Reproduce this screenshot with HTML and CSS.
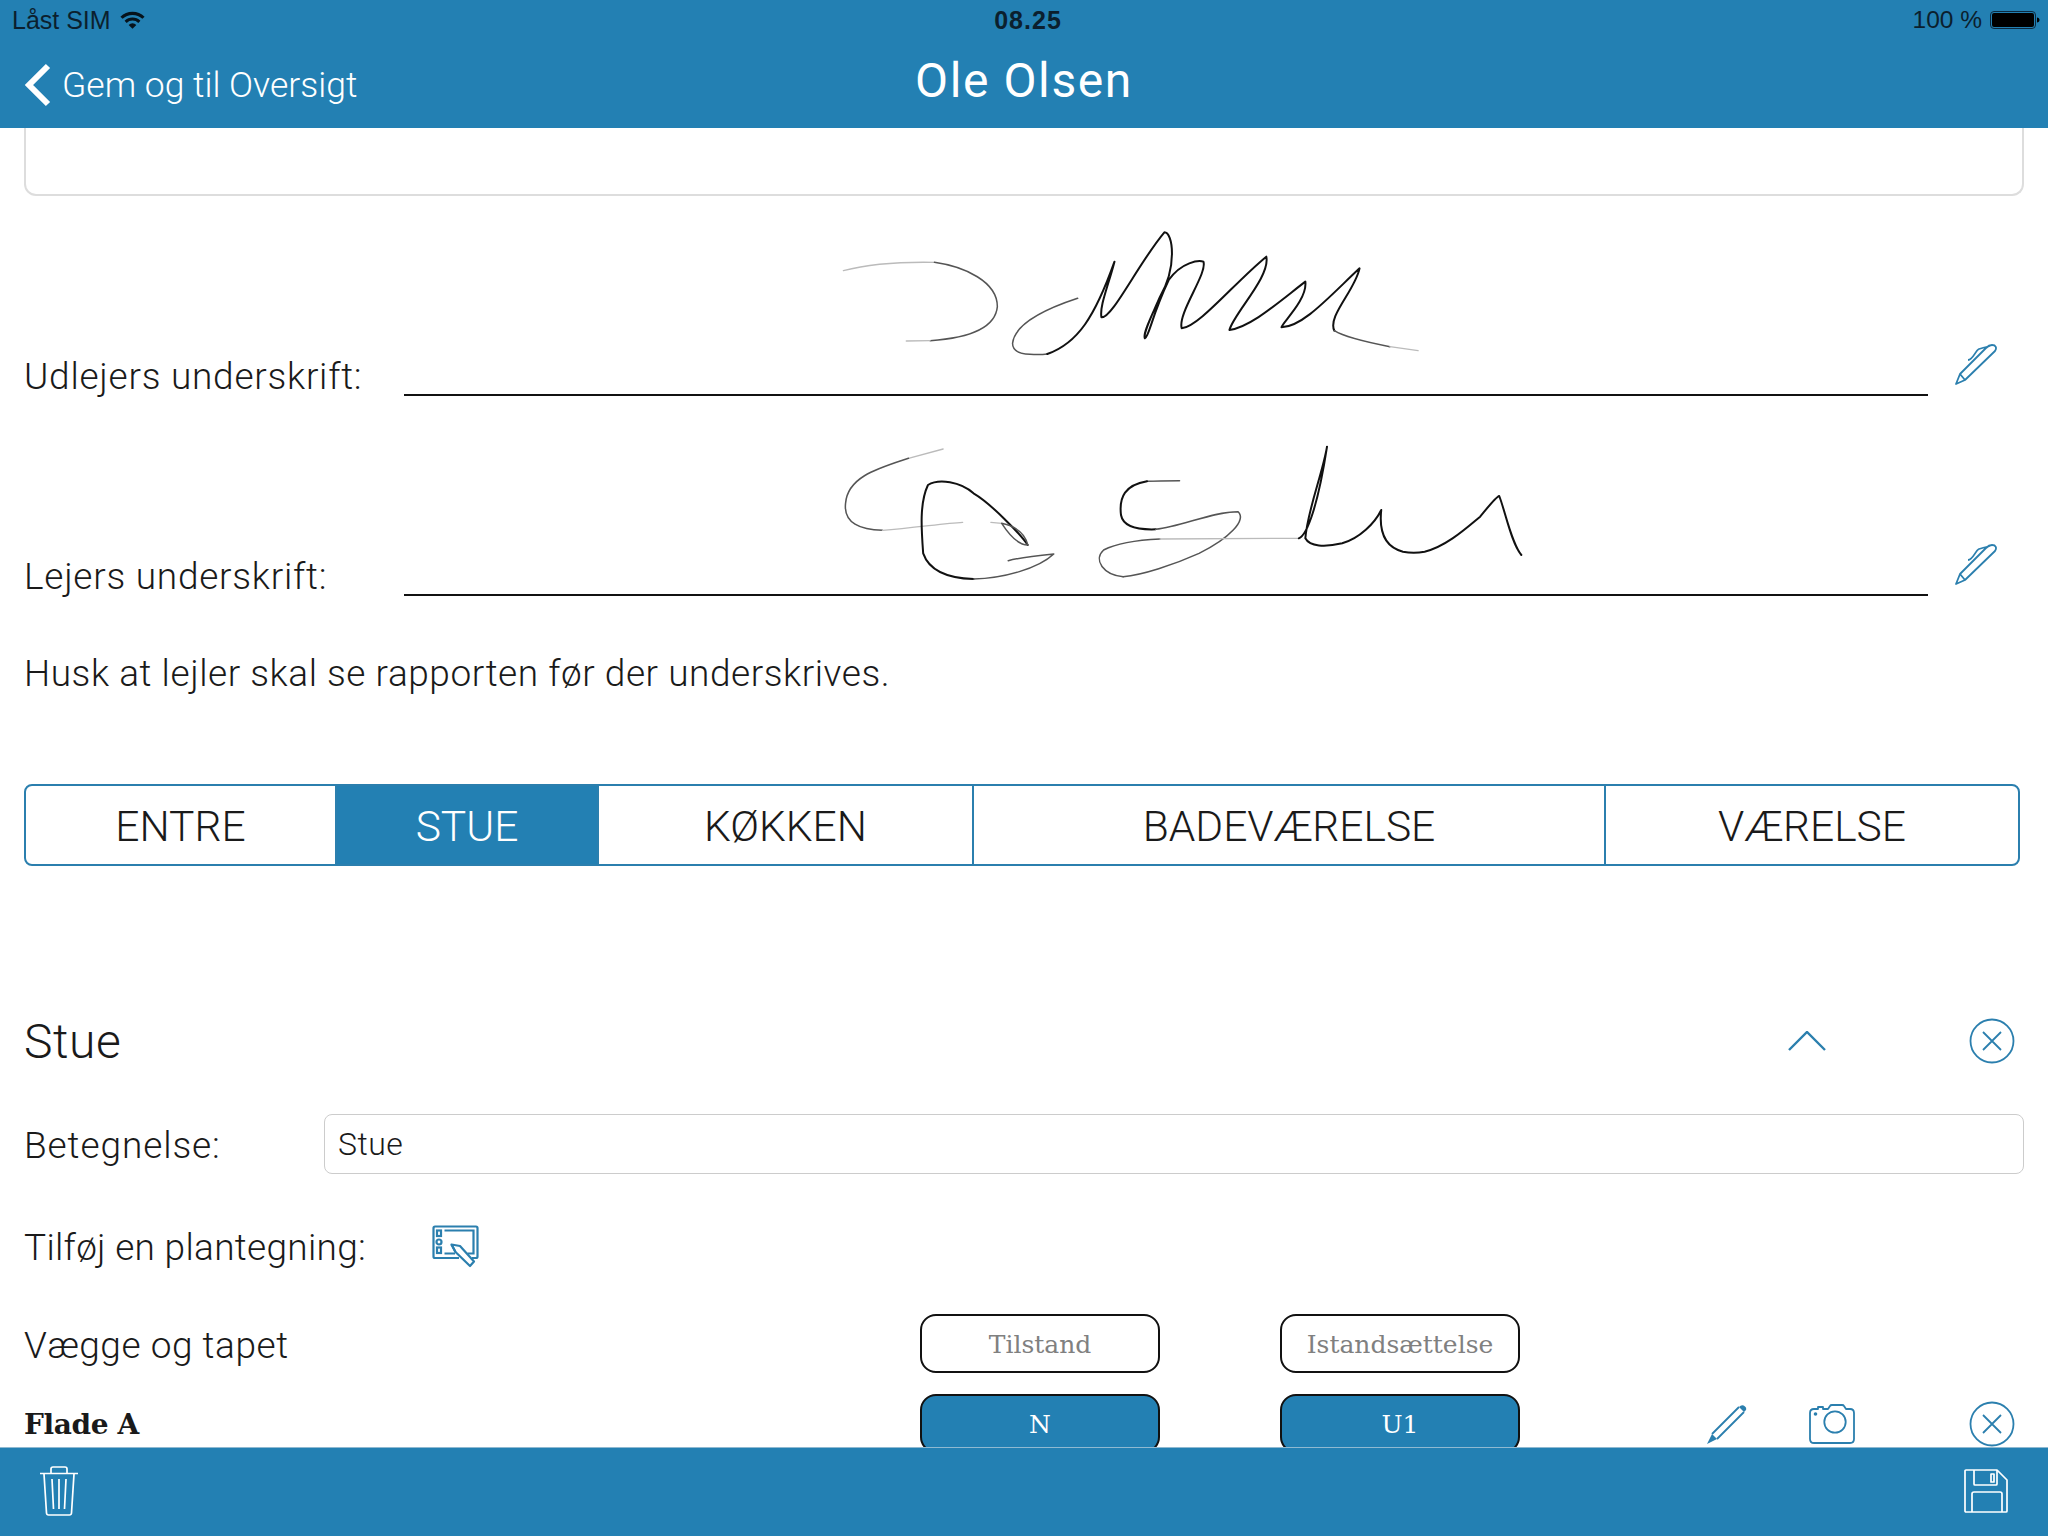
FILE: index.html
```html
<!DOCTYPE html>
<html lang="da">
<head>
  <meta charset="UTF-8" />
  <title>Ole Olsen</title>
  <link rel="stylesheet" href="styles.css">
</head>
<body>

<div class="app">
  <header class="top">
    <div class="status">
      <div class="status-left">
        <span>Låst SIM</span>
        <svg class="wifi" viewBox="0 0 24 17"><path d="M12 17 8.300 13.200a5.400 5.400 0 0 1 7.400 0zM6.400 11.300 4.400 9.200a11 11 0 0 1 15.200 0l-2 2.100a8.100 8.100 0 0 0-11.200 0zM2.500 7.400.4 5.300a16.700 16.700 0 0 1 23.200 0l-2.100 2.100a13.800 13.800 0 0 0-19 0z"/></svg>
      </div>
      <div class="status-time">08.25</div>
      <div class="status-right">
        <span>100 %</span>
        <svg class="battery" viewBox="0 0 50 18"><rect x="0.5" y="0.5" width="45" height="17" rx="3.5" fill="none" stroke="#0b2a40"/><rect x="2" y="2" width="42" height="14" rx="2" fill="#000"/><path d="M47 6.500c1.500 0 2.500 1 2.500 2.500s-1 2.500-2.500 2.500z" fill="#000"/></svg>
      </div>
    </div>
    <div class="nav">
      <a class="back">
        <svg class="back-icon" viewBox="0 0 30 46"><path d="M25 4 6 23l19 19" fill="none" stroke="#fff" stroke-width="6"/></svg>
        <span>Gem og til Oversigt</span>
      </a>
      <h1>Ole Olsen</h1>
    </div>
  </header>

  <main class="content">
    <div class="notes-box"></div>

    <div class="sign-row">
      <label>Udlejers underskrift:</label>
      <div class="sign-line"></div>
      <svg class="pen" viewBox="0 0 42 42"><path d="M1 40 10 36 40 7C42 4 41 1 37 1 35 1 33 2 31 4L5 30zM5 30l5 6M13 16c5 0 7-9 11-11 3-1 7-2 11-3" fill="none" stroke="#2b7fae" stroke-width="1.800" stroke-linejoin="round"/></svg>
      <svg class="signature sig-one" viewBox="0 30 1706 450" preserveAspectRatio="none">
        <g fill="none" stroke-linecap="round" stroke-linejoin="round">
          <path class="ink-faint" d="M100 182C150 165 230 155 310 157"/>
          <path class="ink-thin" d="M310 157C380 170 455 215 455 290 450 360 380 385 300 392"/>
          <path class="ink-faint" d="M300 392 245 393"/>
          <path class="ink-thin" d="M640 265C570 295 495 340 490 400 490 425 510 432 530 433 545 434 558 434 570 432"/>
          <path class="ink" d="M570 432C640 400 680 320 725 155 710 230 690 290 695 322 720 325 780 160 840 67 860 67 870 170 830 260 810 320 790 370 795 385 805 380 810 320 850 210 880 155 920 150 930 155 940 190 870 310 880 355 920 350 1000 220 1075 140 1085 200 1000 310 990 360 1040 350 1100 280 1165 215 1170 270 1110 340 1110 352 1160 350 1220 260 1290 175 1280 240 1215 320 1232 362"/>
          <path class="ink-thin" d="M1232 362C1260 385 1320 400 1360 410"/>
          <path class="ink-faint" d="M1360 410 1425 422"/>
        </g>
      </svg>
    </div>

    <div class="sign-row">
      <label>Lejers underskrift:</label>
      <div class="sign-line"></div>
      <svg class="pen" viewBox="0 0 42 42"><path d="M1 40 10 36 40 7C42 4 41 1 37 1 35 1 33 2 31 4L5 30zM5 30l5 6M13 16c5 0 7-9 11-11 3-1 7-2 11-3" fill="none" stroke="#2b7fae" stroke-width="1.800" stroke-linejoin="round"/></svg>
      <svg class="signature sig-two" viewBox="0 690 1706 450" preserveAspectRatio="none">
        <g fill="none" stroke-linecap="round" stroke-linejoin="round">
          <path class="ink-faint" d="M330 717 250 745"/>
          <path class="ink-thin" d="M250 745C180 775 110 800 105 880 100 940 140 960 190 961"/>
          <path class="ink-faint" d="M190 961C260 955 330 940 375 937M440 937 465 940"/>
          <path class="ink" d="M525 1005C510 975 440 880 400 850 370 815 320 805 295 825 275 880 280 960 284 1030 300 1090 350 1105 400 1107"/>
          <path class="ink-thin" d="M400 1107C470 1105 550 1075 585 1032 540 1038 500 1045 480 1052M465 940C500 950 520 975 525 1005 500 1005 480 970 465 940"/>
          <path class="ink-thin" d="M875 812C850 812 825 812 800 814"/>
          <path class="ink" d="M800 814C750 825 735 860 740 915 745 950 775 960 820 958"/>
          <path class="ink-thin" d="M820 958C880 950 950 905 1010 905 1030 930 990 985 920 1030 860 1065 790 1095 745 1100"/>
          <path class="ink-thin" d="M745 1100C700 1095 675 1050 700 1020 730 1000 780 990 830 987"/>
          <path class="ink-faint" d="M830 987 1150 985"/>
          <path class="ink" d="M1150 985C1170 975 1195 880 1215 710 1205 790 1170 900 1165 985 1175 1010 1210 1012 1250 1000 1290 985 1325 940 1340 900 1335 960 1345 1010 1390 1025 1405 1029 1425 1029 1440 1025 1490 1010 1540 950 1568 920 1590 885 1605 860 1612 858 1625 900 1640 1000 1663 1035"/>
        </g>
      </svg>
    </div>

    <p class="note">Husk at lejler skal se rapporten før der underskrives.</p>

    <div class="tabs">
      <div class="tab">ENTRE</div>
      <div class="tab active">STUE</div>
      <div class="tab">KØKKEN</div>
      <div class="tab">BADEVÆRELSE</div>
      <div class="tab">VÆRELSE</div>
    </div>

    <div class="room-head">
      <h2>Stue</h2>
      <svg class="chevron" viewBox="0 0 40 20"><path d="M2 19 20 1l18 18" fill="none" stroke="#2b7fae" stroke-width="2.400"/></svg>
      <svg class="close" viewBox="0 0 46 46"><circle cx="23" cy="23" r="21.500" fill="none" stroke="#2b7fae" stroke-width="1.800"/><path d="M14 14l18 18M32 14 14 32" stroke="#2b7fae" stroke-width="1.800"/></svg>
    </div>

    <div class="field-row">
      <label>Betegnelse:</label>
      <div class="text-input">Stue</div>
    </div>

    <div class="plan-row">
      <label>Tilføj en plantegning:</label>
      <svg class="tablet" viewBox="0 0 48 44"><g fill="none" stroke="#2b7fae" stroke-width="2.200"><path d="M27 33H3q-1.500 0-1.500-1.500V3Q1.500 1.500 3 1.500h41q1.500 0 1.500 1.500v28.500q0 1.500-1.500 1.500h-4"/><path d="M12.500 5.500h29v23h-6M23 28.500H12.500z"/><rect x="5" y="5.500" width="4" height="5.500"/><rect x="5" y="22.500" width="4" height="5.500"/><circle cx="7" cy="17" r="2.500"/><path d="M19.500 19.500 28 21 42 36.500 38 41 23.500 27z" stroke-linejoin="round"/><path d="M19.500 19.500 23.500 27"/></g></svg>
    </div>

    <div class="item-row head">
      <span class="item-name">Vægge og tapet</span>
      <button class="pick">Tilstand</button>
      <button class="pick">Istandsættelse</button>
    </div>

    <div class="item-row">
      <strong class="item-title">Flade A</strong>
      <button class="pick selected">N</button>
      <button class="pick selected">U1</button>
      <svg class="pencil" viewBox="0 0 42 42"><path d="M6 31 33 4M11 36 38 9" stroke="#2b7fae" stroke-width="1.800" fill="none"/><path d="M33 4q3-3 6-.5t-1 5.500l-5-5z" fill="#2b7fae"/><path d="M6 31l5 5-10 5z" fill="#2b7fae"/></svg>
      <svg class="camera" viewBox="0 0 46 42"><path d="M5 6h4V4h5v2h5l2-3q.500-1 2-1h10q1.500 0 2 1l2 3h4q4 0 4 4v26q0 4-4 4H5q-4 0-4-4V10q0-4 4-4z" fill="none" stroke="#2b7fae" stroke-width="1.800" stroke-linejoin="round"/><circle cx="26" cy="19" r="10.700" fill="none" stroke="#2b7fae" stroke-width="1.800"/><circle cx="6.500" cy="11" r="1.800" fill="#2b7fae"/></svg>
      <svg class="close" viewBox="0 0 46 46"><circle cx="23" cy="23" r="21.500" fill="none" stroke="#2b7fae" stroke-width="1.800"/><path d="M14 14l18 18M32 14 14 32" stroke="#2b7fae" stroke-width="1.800"/></svg>
    </div>
  </main>

  <footer class="bottom">
    <svg class="trash" viewBox="0 0 38 50"><g fill="none" stroke="#fff" stroke-width="1.700"><path d="M0 7.500h38M4 8l2.500 39q.2 2 2 2h21q1.800 0 2-2L34 8M11 7V3q0-2 2-2h12q2 0 2 2v4M12 13l1.500 30M19 13v30M26 13l-1.500 30"/></g></svg>
    <svg class="save" viewBox="0 0 44 44"><g fill="none" stroke="#fff" stroke-width="1.700" stroke-linejoin="round"><path d="M1 2q0-1 1-1h31l10 10v31q0 1-1 1H2q-1 0-1-1z"/><path d="M10 1v14q0 1 1 1h21q1 0 1-1V1M27 5h3v8h-3zM8 43V25q0-2 2-2h26q2 0 2 2v18"/></g></svg>
  </footer>
</div>

</body>
</html>
```

FILE: styles.css
```css
* { box-sizing: border-box; }

body {
  margin: 0;
  font-family: Roboto, sans-serif;
  font-weight: 300;
  color: #1a1a1a;
  background: white;
}

.app {
  width: 2048px;
  height: 1536px;
  display: flex;
  flex-direction: column;
  overflow: hidden;
}

/* Top bars */
.top {
  height: 128px;
  background: #2380b3;
  flex: none;
}

.status {
  height: 40px;
  padding: 0 8px 0 12px;
  display: grid;
  grid-template-columns: 1fr auto 1fr;
  align-items: center;
  font-family: "Liberation Sans", sans-serif;
  font-size: 25px;
  font-weight: 400;
  color: #0b1f2e;
}

.status-left {
  display: flex;
  align-items: center;
  gap: 9px;
}

.wifi {
  width: 25px;
  height: 18px;
  fill: #06121b;
}

.status-time {
  margin-left: 4px;
  font-weight: 700;
  font-size: 25px;
  letter-spacing: 1px;
}

.status-right {
  display: flex;
  justify-content: flex-end;
  align-items: center;
  gap: 8px;
  font-size: 24.500px;
}

.battery {
  width: 50px;
  height: 18px;
}

.nav {
  position: relative;
  height: 88px;
  display: flex;
  align-items: center;
  color: white;
}

.back {
  display: flex;
  align-items: center;
  gap: 9px;
  padding: 0 0 0 23px;
  font-size: 35.500px;
  margin-top: 2px;
}

.back-icon {
  width: 30px;
  height: 46px;
}

.nav h1 {
  position: absolute;
  left: 0;
  right: 0;
  margin: -7px 0 0;
  text-align: center;
  font-size: 48px;
  font-weight: 400;
  letter-spacing: 1.600px;
}

/* Main content */
.content {
  flex: 1;
  min-height: 0;
  overflow: hidden;
  padding: 0 24px;
  letter-spacing: 0.550px;
}

.notes-box {
  height: 68px;
  width: 2000px;
  border: 2px solid #ddd;
  border-top: none;
  border-radius: 0 0 12px 12px;
}

.sign-row {
  position: relative;
  height: 200px;
  display: flex;
  align-items: flex-end;
  font-size: 37px;
  letter-spacing: 0.750px;
}

.sign-row label {
  width: 380px;
  line-height: 44px;
  margin-bottom: -3px;
}

.sign-line {
  width: 1524px;
  border-bottom: 2px solid #111;
}

.pen {
  width: 42px;
  height: 42px;
  margin: 0 0 10px 27px;
}

.signature {
  position: absolute;
  left: 776px;
  width: 740px;
  height: 150px;
}

.sig-one { top: 24px; }
.sig-two { top: 44px; }

.ink, .ink-thin, .ink-faint {
  vector-effect: non-scaling-stroke;
}

.ink { stroke: #111; stroke-width: 2; }
.ink-thin { stroke: #555; stroke-width: 1.500; }
.ink-faint { stroke: #bbb; stroke-width: 1.300; }

.note {
  margin: 54px 0 0;
  line-height: 48px;
  font-size: 37px;
}

.tabs {
  margin-top: 86px;
  width: 1996px;
  height: 82px;
  display: grid;
  grid-template-columns: 309px 262px 375px 632px 414px;
  border: 2px solid #2b7fae;
  border-radius: 8px;
  overflow: hidden;
  letter-spacing: 0;
}

.tab {
  display: flex;
  align-items: center;
  justify-content: center;
  padding-top: 3px;
  font-size: 42.500px;
  border-left: 2px solid #2b7fae;
}

.tab:first-child { border-left: none; }

.tab.active {
  background: #2380b3;
  color: white;
}

.room-head {
  display: flex;
  align-items: center;
  height: 60px;
  margin-top: 145px;
}

.room-head h2 {
  margin: 0;
  font-size: 48px;
  font-weight: 300;
  flex: 1;
}

.chevron {
  width: 40px;
  height: 20px;
  margin-right: 142px;
}

.close {
  width: 46px;
  height: 46px;
  margin-right: 9px;
  flex: none;
}

.field-row {
  display: flex;
  align-items: center;
  margin-top: 43px;
  font-size: 37px;
  letter-spacing: 0.900px;
}

.field-row label {
  width: 300px;
  padding-top: 2px;
}

.text-input {
  width: 1700px;
  height: 60px;
  padding: 0 13px;
  display: flex;
  align-items: center;
  border: 1px solid #ccc;
  border-radius: 8px;
  font-size: 32px;
  font-weight: 300;
  letter-spacing: 0.500px;
}

.plan-row {
  display: flex;
  align-items: center;
  height: 46px;
  margin-top: 50px;
  font-size: 37px;
  letter-spacing: 0.300px;
}

.plan-row label { width: 408px; }

.tablet {
  width: 48px;
  height: 44px;
}

.item-row {
  display: flex;
  align-items: center;
  height: 59px;
  margin-top: 21px;
  font-size: 37px;
  position: relative;
}

.item-row.head { margin-top: 44px; }

.item-name {
  width: 896px;
  padding-top: 4px;
}

.item-title {
  width: 896px;
  padding-top: 2px;
  font-family: "DejaVu Serif", serif;
  font-size: 28px;
  font-weight: 700;
  letter-spacing: -0.400px;
}

.pick {
  width: 240px;
  height: 59px;
  margin-right: 120px;
  padding: 2px 0 0;
  background: white;
  border: 2px solid #111;
  border-radius: 16px;
  font-family: "DejaVu Serif", serif;
  font-size: 25px;
  font-weight: 400;
  color: #808080;
}

.pick.selected {
  background: #2380b3;
  color: white;
}

.pencil {
  width: 42px;
  height: 42px;
  margin-left: 66px;
}

.camera {
  width: 46px;
  height: 42px;
  margin-left: 61px;
  margin-right: 114px;
}

/* Bottom bar */
.bottom {
  height: 89px;
  flex: none;
  background: #2380b3;
  border-top: 1px solid #8fb9d1;
  padding: 18px 40px 0;
  display: flex;
  justify-content: space-between;
  align-items: flex-start;
}

.trash {
  width: 38px;
  height: 50px;
}

.save {
  width: 44px;
  height: 44px;
  margin: 3px 0 0 0;
}
```
